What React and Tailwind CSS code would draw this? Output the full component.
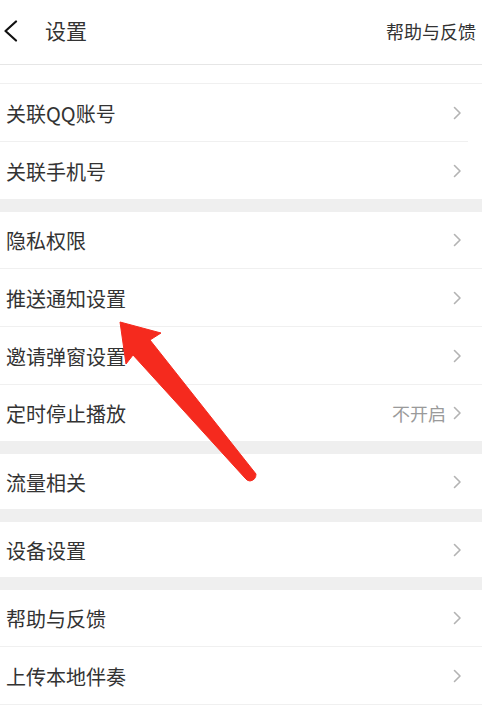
import React from "react";

const font = { fontFamily: '"Noto Sans CJK SC", "Noto Sans", sans-serif' };

function Chevron() {
  return (
    <svg width="10" height="14" viewBox="0 0 10 14" className="shrink-0">
      <path d="M2.5 1.5 L8 7 L2.5 12.5" fill="none" stroke="#b3b3b3" strokeWidth="1.6" strokeLinecap="round" strokeLinejoin="round" />
    </svg>
  );
}

function Row({ label, value, h, border, shortBorder }) {
  return (
    <div className={`relative flex items-center justify-between bg-white pl-[6px] pr-[20px] ${h} ${border ? "border-b border-[#f0f0f0]" : ""}`}>
      <span className="text-[20px] leading-none text-[#333333] pt-[2px]">{label}</span>
      <div className="flex items-center gap-[6px]">
        {value && <span className="text-[18px] leading-none text-[#9a9a9a]">{value}</span>}
        <Chevron />
      </div>
      {shortBorder && <div className="absolute bottom-0 left-0 right-[14px] h-px bg-[#f0f0f0]" />}
    </div>
  );
}

function Gap() {
  return <div className="h-[13px] bg-[#efefef]" />;
}

export default function App() {
  return (
    <div className="relative w-[482px] h-[720px] overflow-hidden bg-white" style={font}>
      <div className="flex h-[65px] items-center justify-between border-b border-[#e6e6e6] pl-[3px] pr-[6px]">
        <div className="flex items-center mb-[3px]">
          <svg width="16" height="22" viewBox="0 0 16 22">
            <path d="M13 1.5 L2.5 11 L13 20.5" fill="none" stroke="#111" strokeWidth="2.2" strokeLinecap="round" strokeLinejoin="round" />
          </svg>
          <span className="ml-[26px] text-[21px] leading-none text-[#333333]">设置</span>
        </div>
        <span className="text-[18px] leading-none text-[#333333] mb-[3px]">帮助与反馈</span>
      </div>
      <div className="h-[19px] border-b border-[#f0f0f0]" />
      <Row label="关联QQ账号" h="h-[58px]" shortBorder />
      <Row label="关联手机号" h="h-[57px]" />
      <Gap />
      <Row label="隐私权限" h="h-[57px]" border />
      <Row label="推送通知设置" h="h-[58px]" border />
      <Row label="邀请弹窗设置" h="h-[58px]" border />
      <Row label="定时停止播放" value="不开启" h="h-[56px]" />
      <Gap />
      <Row label="流量相关" h="h-[55px]" />
      <Gap />
      <Row label="设备设置" h="h-[55px]" />
      <Gap />
      <Row label="帮助与反馈" h="h-[57px]" border />
      <Row label="上传本地伴奏" h="h-[58px]" border />

      <svg className="absolute left-0 top-0 pointer-events-none" width="482" height="720" viewBox="0 0 482 720">
        <path
          d="M120 322 L161 333 L150 340 L256 474 Q256 480 250 481 Q247 481 245 478 L133 355 L126 364 Z"
          fill="#f52a1e"
          stroke="#f52a1e"
          strokeWidth="1"
          strokeLinejoin="round"
        />
      </svg>
    </div>
  );
}
